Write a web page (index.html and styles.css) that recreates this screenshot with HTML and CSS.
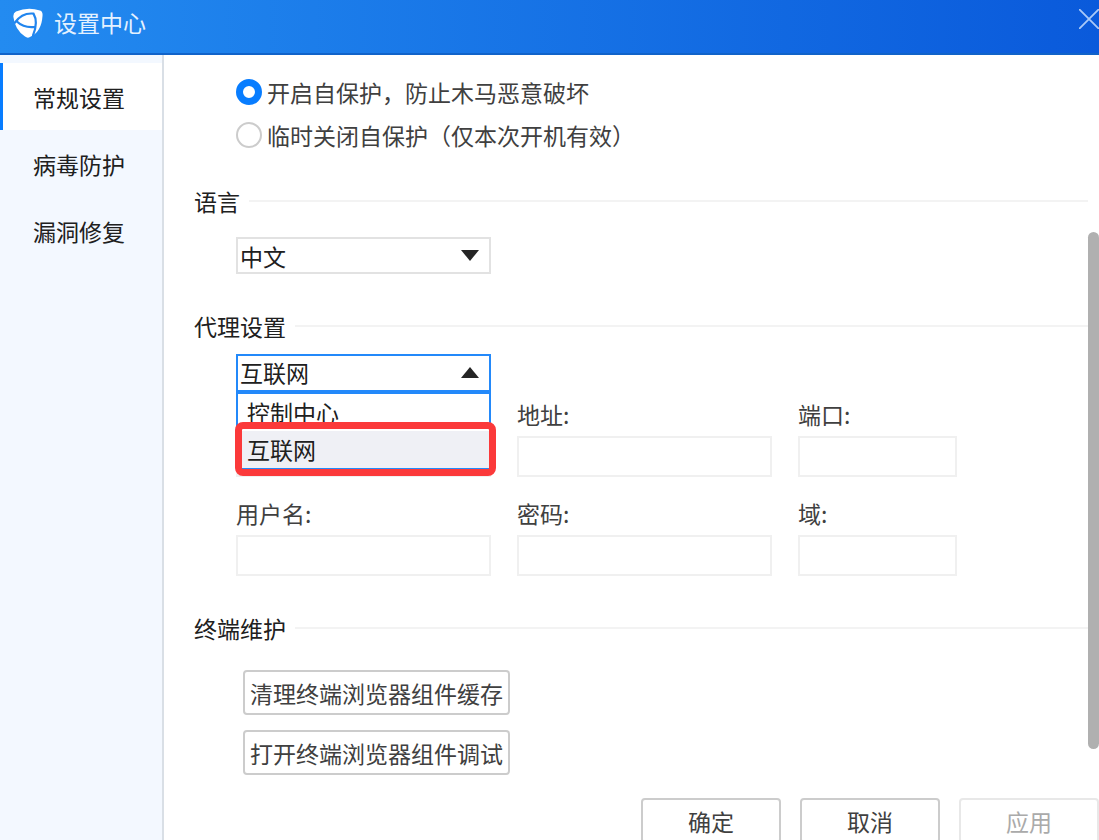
FILE: index.html
```html
<!DOCTYPE html>
<html lang="zh-CN">
<head>
<meta charset="utf-8">
<title>设置中心</title>
<link rel="stylesheet" href="styles.css">
</head>
<body>
<div class="dialog">
  <header class="titlebar">
    <svg class="logo" viewBox="0 0 30 30" aria-hidden="true">
      <path d="M3 3.500Q15-1.500 27 2.500Q30 3.500 29.500 8Q28.500 24 17 29Q14.500 30.500 12 28.500Q2 22 .4 9Q0 5 3 3.500Z" fill="#fff"/>
      <path d="M2 14.500Q9 4.500 20.500 5.600M20.500 5.600Q25.500 14 20 27.500M4.500 14Q10.500 20 21.500 19" fill="none" stroke="#2185ee" stroke-width="2.200" stroke-linecap="round"/>
    </svg>
    <h1 class="title">设置中心</h1>
    <button class="close" type="button" aria-label="关闭">
      <svg viewBox="0 0 20 20" aria-hidden="true"><path d="M0 0L20 20M20 0L0 20" stroke="#a9c9f8" stroke-width="1.800"/></svg>
    </button>
  </header>
  <div class="body">
    <nav class="sidebar">
      <a class="tab active" href="#general" aria-current="page">常规设置</a>
      <a class="tab" href="#virus">病毒防护</a>
      <a class="tab" href="#patch">漏洞修复</a>
    </nav>
    <main class="content" id="general">
      <div class="options">
        <label class="option"><input type="radio" name="protect" checked>开启自保护，防止木马恶意破坏</label>
        <label class="option"><input type="radio" name="protect">临时关闭自保护（仅本次开机有效）</label>
      </div>

      <section class="section">
        <h2 class="heading">语言</h2>
        <div class="picker picker-language">
          <select class="select" aria-label="语言"><option>中文</option></select>
          <svg class="arrow" viewBox="0 0 18 11" aria-hidden="true"><path d="M0 0H18L9 11Z"/></svg>
        </div>
      </section>

      <section class="section">
        <h2 class="heading">代理设置</h2>
        <div class="picker picker-proxy">
          <select class="select open" aria-label="代理设置"><option>互联网</option><option>控制中心</option></select>
          <svg class="arrow" viewBox="0 0 18 11" aria-hidden="true"><path d="M0 11H18L9 0Z"/></svg>
          <ul class="menu" role="listbox" aria-label="代理设置">
            <li class="choice" role="option" aria-selected="false">控制中心</li>
            <li class="choice chosen" role="option" aria-selected="true">互联网</li>
          </ul>
          <span class="highlight"></span>
        </div>
        <div class="fields">
          <div class="field field-end"><input class="text" type="text" aria-label="代理"></div>
          <div class="field"><label for="address">地址:</label><input class="text" id="address" type="text"></div>
          <div class="field"><label for="port">端口:</label><input class="text" id="port" type="text"></div>
          <div class="field"><label for="user">用户名:</label><input class="text" id="user" type="text"></div>
          <div class="field"><label for="password">密码:</label><input class="text" id="password" type="password"></div>
          <div class="field"><label for="domain">域:</label><input class="text" id="domain" type="text"></div>
        </div>
      </section>

      <section class="section">
        <h2 class="heading">终端维护</h2>
        <div class="tools">
          <button class="button" type="button">清理终端浏览器组件缓存</button>
          <button class="button" type="button">打开终端浏览器组件调试</button>
        </div>
      </section>

      <footer class="actions">
        <button class="button action" type="button">确定</button>
        <button class="button action" type="button">取消</button>
        <button class="button action" type="button" disabled>应用</button>
      </footer>
      <span class="thumb"></span>
    </main>
  </div>
</div>
</body>
</html>
```

FILE: styles.css
```css
* {
  box-sizing: border-box;
}

body {
  margin: 0;
  overflow: hidden;
  background: #fff;
  color: #404040;
  font: 23px/28px "Noto Sans CJK SC", sans-serif;
}

button,
input,
select {
  margin: 0;
  color: inherit;
  font: inherit;
}

.dialog {
  display: flex;
  flex-direction: column;
  height: 100vh;
}

.titlebar {
  display: flex;
  flex: none;
  align-items: flex-start;
  height: 55px;
  padding: 8px 0 0 13px;
  border-bottom: 2px solid #1163c9;
  background: linear-gradient(90deg, #238bf0, #0a5adb);
  color: #e4f1ff;
}

.logo {
  width: 30px;
  height: 30px;
}

.title {
  flex: 1;
  margin: 0 0 0 11px;
  font-size: 23px;
  font-weight: 400;
}

.close {
  display: flex;
  padding: 1px 0 0;
  border: 0;
  background: none;
}

.close svg {
  width: 20px;
  height: 20px;
}

.body {
  display: flex;
  flex: 1;
  min-height: 0;
}

.sidebar {
  flex: none;
  width: 164px;
  padding-top: 8px;
  border-right: 2px solid #d9dfe6;
  background: #f3f8ff;
}

.tab {
  display: flex;
  align-items: center;
  height: 67px;
  padding-left: 33px;
  color: #202020;
  text-decoration: none;
}

.active {
  padding-left: 30px;
  border-left: 3px solid #087dff;
  background: #fff;
}

.content {
  position: relative;
  flex: 1;
  min-width: 0;
  padding: 23px 0 0 30px;
}

.options {
  display: grid;
  gap: 15px;
  padding-left: 42px;
}

.option {
  display: flex;
  align-items: center;
  gap: 5px;
}

.option input {
  width: 26px;
  height: 26px;
  border: 2px solid #ccc;
  border-radius: 50%;
  appearance: none;
  background: #fff;
}

.option input:checked {
  border: 7px solid #087dff;
}

.section {
  padding-top: 38px;
}

.heading {
  display: flex;
  align-items: center;
  gap: 9px;
  margin: 0 11px 0 0;
  color: #202020;
  font-size: 23px;
  font-weight: 400;
}

.heading::after {
  flex: 1;
  height: 2px;
  background: #f3f3f3;
  content: "";
}

.picker {
  position: relative;
  width: 255px;
  margin-left: 42px;
  color: #202020;
}

.picker-language {
  margin-top: 22px;
}

.picker-proxy {
  z-index: 1;
  margin-top: 14px;
}

.select {
  display: block;
  width: 100%;
  height: 37px;
  padding: 0 2px;
  border: 2px solid #e2e2e2;
  border-radius: 0;
  appearance: none;
  background: #fff;
}

.open {
  height: 38px;
  padding-bottom: 3px;
  border-color: #2389fa;
}

.arrow {
  position: absolute;
  top: 13px;
  right: 12px;
  width: 18px;
  height: 11px;
  fill: #252525;
  pointer-events: none;
}

.menu {
  position: absolute;
  top: 100%;
  left: 0;
  width: 100%;
  margin: 0;
  padding: 0;
  border: 2px solid #2389fa;
  background: #fff;
  list-style: none;
}

.choice {
  height: 37px;
  padding-left: 9px;
  line-height: 37px;
}

.chosen {
  background: #eff0f5;
}

.highlight {
  position: absolute;
  top: 68px;
  right: -5px;
  left: -1px;
  height: 54px;
  border: 7px solid #fb393a;
  border-radius: 8px;
}

.fields {
  display: grid;
  grid-template-columns: minmax(0, 255px) minmax(0, 255px) minmax(0, 159px);
  gap: 22px 26px;
  margin: 8px 11px 0 42px;
}

.field {
  display: grid;
  gap: 8px;
}

.field-end {
  align-content: end;
}

.text {
  width: 100%;
  height: 41px;
  padding: 0 6px;
  border: 2px solid #f0f0f0;
  background: #fff;
}

.tools {
  display: flex;
  flex-direction: column;
  align-items: flex-start;
  gap: 15px;
  margin: 28px 0 0 49px;
}

.button {
  height: 45px;
  padding: 0 5px;
  border: 2px solid #ccc;
  border-radius: 4px;
  background: #fff;
}

.actions {
  display: flex;
  justify-content: flex-end;
  gap: 19px;
  padding-top: 23px;
}

.action {
  width: 140px;
}

.action:disabled {
  border-color: #e8e8e8;
  color: #aaa;
}

.thumb {
  position: absolute;
  top: 177px;
  right: 0;
  width: 11px;
  height: 517px;
  border-radius: 6px;
  background: #b0b0b0;
}
```
